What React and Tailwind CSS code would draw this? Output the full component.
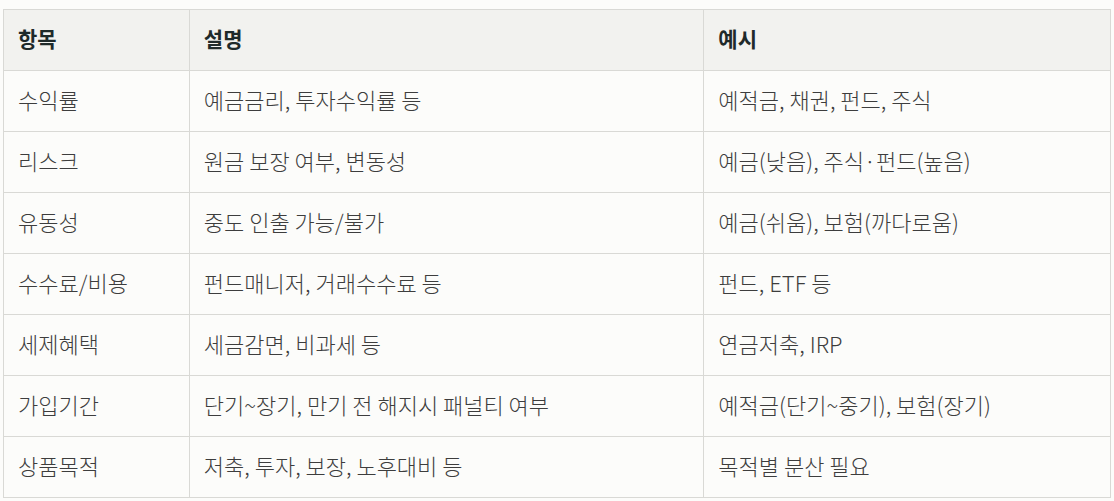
const rows = [
  ["수익률", "예금금리, 투자수익률 등", "예적금, 채권, 펀드, 주식"],
  ["리스크", "원금 보장 여부, 변동성", "예금(낮음), 주식·펀드(높음)"],
  ["유동성", "중도 인출 가능/불가", "예금(쉬움), 보험(까다로움)"],
  ["수수료/비용", "펀드매니저, 거래수수료 등", "펀드, ETF 등"],
  ["세제혜택", "세금감면, 비과세 등", "연금저축, IRP"],
  ["가입기간", "단기~장기, 만기 전 해지시 패널티 여부", "예적금(단기~중기), 보험(장기)"],
  ["상품목적", "저축, 투자, 보장, 노후대비 등", "목적별 분산 필요"],
];

export default function App() {
  return (
    <div
      className="min-h-screen bg-[#fcfcfa] pt-[9px] px-[3px]"
      style={{ fontFamily: '"Noto Sans CJK KR", "Noto Sans", sans-serif' }}
    >
      <table className="w-[1108px] border-collapse border border-[#d9d9d5] text-[22px] font-light text-[#3d3d3d]">
        <colgroup>
          <col className="w-[186px]" />
          <col className="w-[515px]" />
          <col className="w-[407px]" />
        </colgroup>
        <thead>
          <tr className="bg-[#f2f2ef] h-[61px]">
            <th className="border border-[#d9d9d5] px-[14px] pb-[3px] text-left font-bold text-[21px] text-[#1f2a2a]">항목</th>
            <th className="border border-[#d9d9d5] px-[14px] pb-[3px] text-left font-bold text-[21px] text-[#1f2a2a]">설명</th>
            <th className="border border-[#d9d9d5] px-[14px] pb-[3px] text-left font-bold text-[21px] text-[#1f2a2a]">예시</th>
          </tr>
        </thead>
        <tbody>
          {rows.map((r) => (
            <tr key={r[0]} className="h-[61px]">
              {r.map((c, i) => (
                <td key={i} className="border border-[#d9d9d5] px-[14px] pb-[4px] leading-none">
                  {c}
                </td>
              ))}
            </tr>
          ))}
        </tbody>
      </table>
    </div>
  );
}
